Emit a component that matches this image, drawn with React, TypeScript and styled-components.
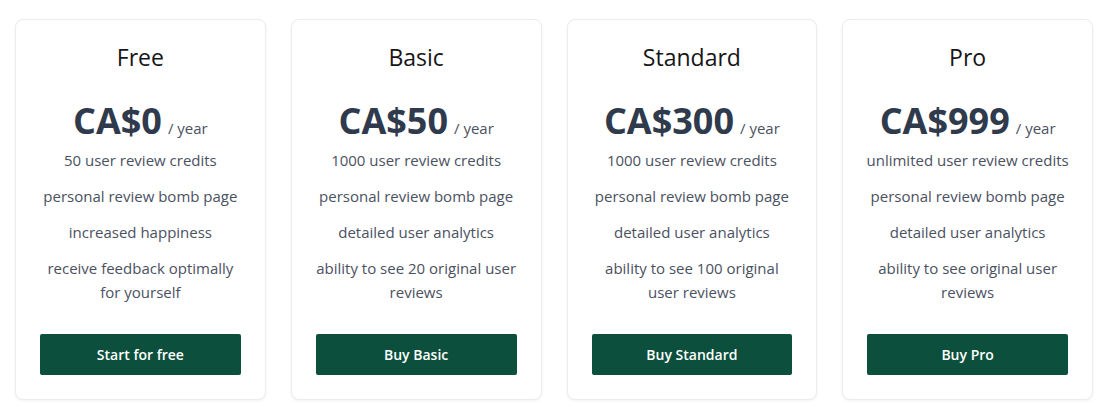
import React from "react";
import styled, { createGlobalStyle } from "styled-components";

const GlobalStyle = createGlobalStyle`
  html, body {
    margin: 0;
    padding: 0;
    background: #ffffff;
    font-family: "Open Sans", "Noto Sans", Arial, sans-serif;
  }
  * { box-sizing: border-box; }
`;

const Page = styled.div`
  display: flex;
  gap: 25px;
  padding: 19px 15px 16px;
  width: 1108px;
`;

const Card = styled.div`
  flex: 1 1 0;
  display: flex;
  flex-direction: column;
  align-items: center;
  padding: 23px 24px 24px;
  border: 1px solid #ececec;
  border-radius: 8px;
  background: #fff;
  box-shadow: 0 1px 3px rgba(0, 0, 0, 0.06);
`;

const Title = styled.h2`
  margin: 0;
  font-size: 23px;
  line-height: 28px;
  font-weight: 500;
  color: #161616;
`;

const PriceRow = styled.div`
  margin-top: 30px;
  display: flex;
  align-items: baseline;
  gap: 6px;
  height: 40px;
`;

const Amount = styled.span`
  font-size: 36px;
  line-height: 40px;
  font-weight: 700;
  color: #2f3a4c;
`;

const Period = styled.span`
  font-size: 15px;
  color: #4a5161;
`;

const Features = styled.ul`
  list-style: none;
  margin: 7px -2px 0;
  padding: 0;
  display: flex;
  flex-direction: column;
  gap: 12px;
  width: calc(100% + 4px);
  text-align: center;
`;

const Feature = styled.li`
  font-size: 15px;
  line-height: 24px;
  color: #4a5161;
`;

const Button = styled.button`
  margin-top: auto;
  width: 100%;
  height: 41px;
  border: none;
  border-radius: 2px;
  background: #0b4f3c;
  color: #ffffff;
  font-family: inherit;
  font-size: 14px;
  font-weight: 600;
  cursor: pointer;
`;

const ButtonSpacer = styled.div`
  height: 30px;
  flex: 0 0 auto;
`;

type Plan = {
  name: string;
  price: string;
  features: string[];
  cta: string;
};

const plans: Plan[] = [
  {
    name: "Free",
    price: "CA$0",
    features: [
      "50 user review credits",
      "personal review bomb page",
      "increased happiness",
      "receive feedback optimally for yourself",
    ],
    cta: "Start for free",
  },
  {
    name: "Basic",
    price: "CA$50",
    features: [
      "1000 user review credits",
      "personal review bomb page",
      "detailed user analytics",
      "ability to see 20 original user reviews",
    ],
    cta: "Buy Basic",
  },
  {
    name: "Standard",
    price: "CA$300",
    features: [
      "1000 user review credits",
      "personal review bomb page",
      "detailed user analytics",
      "ability to see 100 original user reviews",
    ],
    cta: "Buy Standard",
  },
  {
    name: "Pro",
    price: "CA$999",
    features: [
      "unlimited user review credits",
      "personal review bomb page",
      "detailed user analytics",
      "ability to see original user reviews",
    ],
    cta: "Buy Pro",
  },
];

export default function App() {
  return (
    <>
      <GlobalStyle />
      <Page>
        {plans.map((p) => (
          <Card key={p.name}>
            <Title>{p.name}</Title>
            <PriceRow>
              <Amount>{p.price}</Amount>
              <Period>/ year</Period>
            </PriceRow>
            <Features>
              {p.features.map((f) => (
                <Feature key={f}>{f}</Feature>
              ))}
            </Features>
            <ButtonSpacer />
            <Button>{p.cta}</Button>
          </Card>
        ))}
      </Page>
    </>
  );
}
